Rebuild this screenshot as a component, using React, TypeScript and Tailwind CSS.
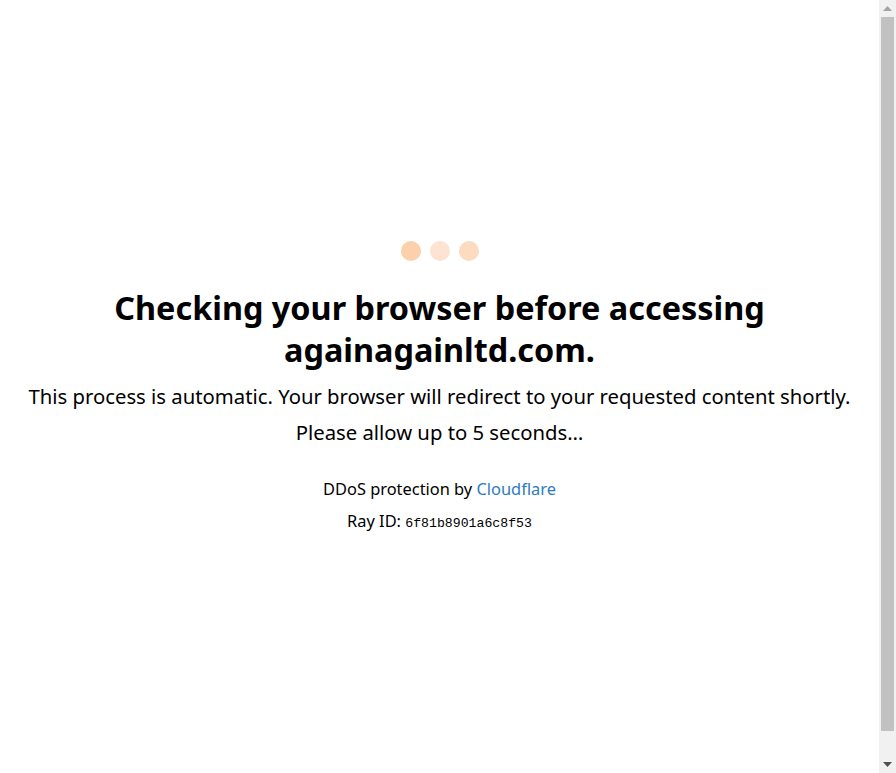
import React from 'react';

const Scrollbar: React.FC = () => (
  <div className="flex w-[17px] shrink-0 flex-col bg-[#f1f1f1]">
    <div className="flex h-[17px] items-center justify-center">
      <svg width="9" height="5" viewBox="0 0 9 5">
        <path d="M4.5 0 L9 5 L0 5 Z" fill="#a3a3a3" />
      </svg>
    </div>
    <div className="mx-[2px] h-[714px] bg-[#c1c1c1]" />
    <div className="flex-1" />
    <div className="flex h-[17px] items-center justify-center">
      <svg width="9" height="5" viewBox="0 0 9 5">
        <path d="M0 0 L9 0 L4.5 5 Z" fill="#505050" />
      </svg>
    </div>
  </div>
);

const App: React.FC = () => {
  return (
    <div className="flex h-[773px] bg-white text-black">
      <main
        className="flex-1 overflow-hidden"
        style={{ fontFamily: '"Noto Sans", "Open Sans", sans-serif' }}
      >
        <div className="flex flex-col items-center pt-[241px] text-center">
          <div className="flex items-center gap-[9px]">
            <span className="block h-[20px] w-[20px] rounded-full bg-[#fbd0aa]" />
            <span className="block h-[20px] w-[20px] rounded-full bg-[#fde4d2]" />
            <span className="block h-[20px] w-[20px] rounded-full bg-[#fcdbbe]" />
          </div>
          <h1 className="mt-[25px] px-[100px] text-[32.4px] font-bold leading-[42px]">
            Checking your browser before accessing againagainltd.com.
          </h1>
          <p className="mt-[12px] whitespace-nowrap text-[20.3px] leading-[28px]">
            This process is automatic. Your browser will redirect to your requested content shortly.
          </p>
          <p className="mt-[8px] text-[20.3px] leading-[28px]">Please allow up to 5 seconds&hellip;</p>
          <div className="mt-[32px] text-[16.4px] leading-[22px]">
            DDoS protection by{' '}
            <a href="#" className="text-[#2c7cbf] no-underline">
              Cloudflare
            </a>
          </div>
          <div className="mt-[10px] text-[16.4px] leading-[22px]">
            Ray ID:{' '}
            <code className="text-[13.2px]" style={{ fontFamily: '"Liberation Mono", monospace' }}>
              6f81b8901a6c8f53
            </code>
          </div>
        </div>
      </main>
      <Scrollbar />
    </div>
  );
};

export default App;
